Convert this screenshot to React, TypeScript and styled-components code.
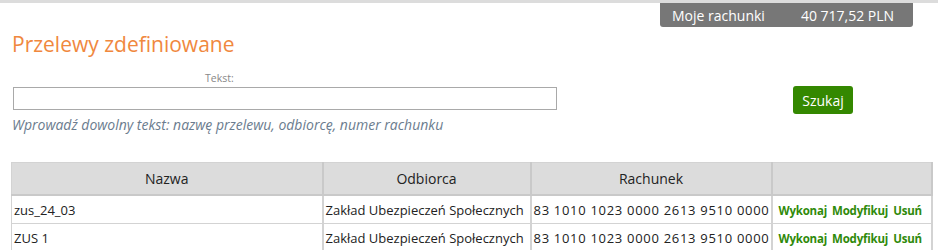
import React from 'react';
import styled, { createGlobalStyle } from 'styled-components';

interface IDefinedTransfer {
  id: string;
  name: string;
  recipient: string;
  account: string;
}

const transfers: IDefinedTransfer[] = [
  { id: '1', name: 'zus_24_03', recipient: 'Zakład Ubezpieczeń Społecznych', account: '83 1010 1023 0000 2613 9510 0000' },
  { id: '2', name: 'ZUS 1', recipient: 'Zakład Ubezpieczeń Społecznych', account: '83 1010 1023 0000 2613 9510 0000' },
];

export default function App() {
  return (
    <>
      <GlobalStyle />
      <SPage>
        <STopBar>
          <SAccountsBadge>
            <span>Moje rachunki</span>
            <span>40 717,52 PLN</span>
          </SAccountsBadge>
        </STopBar>
        <STitle>Przelewy zdefiniowane</STitle>
        <SSearchForm>
          <SSearchField>
            <SLabel htmlFor="search-text">Tekst:</SLabel>
            <SInput id="search-text" type="text" />
            <SHint>Wprowadź dowolny tekst: nazwę przelewu, odbiorcę, numer rachunku</SHint>
          </SSearchField>
          <SButton type="button">Szukaj</SButton>
        </SSearchForm>
        <STable>
          <colgroup>
            <col style={{ width: 311 }} />
            <col style={{ width: 208 }} />
            <col style={{ width: 241 }} />
            <col />
          </colgroup>
          <thead>
            <tr>
              <STh>Nazwa</STh>
              <STh>Odbiorca</STh>
              <STh>Rachunek</STh>
              <STh />
            </tr>
          </thead>
          <tbody>
            {transfers.map((item) => (
              <tr key={item.id}>
                <STd>{item.name}</STd>
                <STd>{item.recipient}</STd>
                <STd $wide>{item.account}</STd>
                <SActionsTd>
                  <SAction href="#">Wykonaj</SAction>
                  <SAction href="#">Modyfikuj</SAction>
                  <SAction href="#">Usuń</SAction>
                </SActionsTd>
              </tr>
            ))}
          </tbody>
        </STable>
      </SPage>
    </>
  );
}

const GlobalStyle = createGlobalStyle`
  html, body {
    margin: 0;
    padding: 0;
    background: #fff;
  }
  body {
    font-family: 'Open Sans', 'Noto Sans', sans-serif;
    color: #333;
  }
`;

const SPage = styled.div`
  width: 938px;
`;

const STopBar = styled.div`
  display: flex;
  justify-content: flex-end;
  border-top: 3px solid #dcdcdc;
  padding-right: 25px;
`;

const SAccountsBadge = styled.div`
  display: flex;
  gap: 36px;
  width: 253px;
  box-sizing: border-box;
  height: 24px;
  padding: 0 10px 0 12px;
  align-items: center;
  background: #777;
  color: #fff;
  font-size: 14px;
  border-radius: 0 0 3px 3px;
`;

const STitle = styled.h1`
  margin: 3px 0 0 12px;
  font-size: 21px;
  line-height: 28px;
  font-weight: 400;
  color: #f0883e;
`;

const SSearchForm = styled.div`
  display: flex;
  align-items: flex-start;
  margin-top: 13px;
  padding-left: 13px;
`;

const SSearchField = styled.div`
  display: flex;
  flex-direction: column;
  width: 544px;
`;

const SLabel = styled.label`
  margin-left: 192px;
  font-size: 10.5px;
  line-height: 14px;
  color: #888;
`;

const SInput = styled.input`
  box-sizing: border-box;
  width: 544px;
  height: 23px;
  margin: 2px 0 0;
  border: 1px solid #a9a9a9;
  outline: none;
  padding: 0 4px;
`;

const SHint = styled.p`
  margin: 5px 0 0 -1px;
  font-size: 14px;
  line-height: 19px;
  font-style: italic;
  color: #6b7c8e;
  white-space: nowrap;
`;

const SButton = styled.button`
  margin: 15px 0 0 236px;
  width: 60px;
  height: 28px;
  padding: 0;
  border: none;
  border-radius: 3px;
  background: #348800;
  color: #fff;
  font-family: 'Open Sans', sans-serif;
  font-size: 14px;
  cursor: pointer;
`;

const STable = styled.table`
  margin: 28px 0 0 11px;
  width: 922px;
  border-collapse: collapse;
  table-layout: fixed;
  border: 1px solid #d3d3d3;
`;

const STh = styled.th`
  height: 31px;
  padding: 0;
  background: #dcdcdc;
  border: 1px solid #c9c9c9;
  border-width: 0 2px 2px 0;
  font-size: 14px;
  font-weight: 400;
  color: #222;
  text-align: center;
`;

const STd = styled.td<{ $wide?: boolean }>`
  height: 27px;
  padding: 0 2px;
  border: 1px solid #d3d3d3;
  border-right-width: 2px;
  font-size: 13px;
  letter-spacing: ${({ $wide }) => ($wide ? '0.7px' : '0')};
  color: #222;
  white-space: nowrap;
  overflow: hidden;
`;

const SActionsTd = styled(STd)`
  padding-left: 6px;
`;

const SAction = styled.a`
  margin-right: 5px;
  font-size: 11.5px;
  font-weight: 700;
  color: #2f8a0a;
  text-decoration: none;
  letter-spacing: -0.2px;
`;
